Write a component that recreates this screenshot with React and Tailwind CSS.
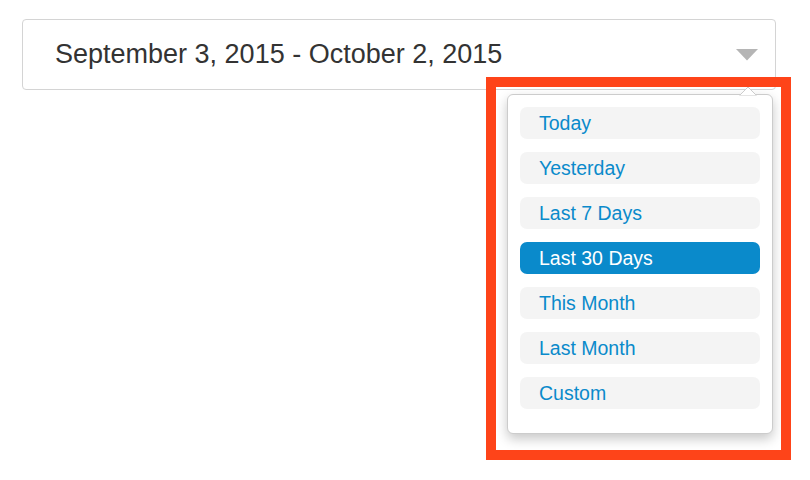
import React from "react";

const ranges = ["Today", "Yesterday", "Last 7 Days", "Last 30 Days", "This Month", "Last Month", "Custom"];

export default function App() {
  const active = "Last 30 Days";

  return (
    <div className="relative w-[810px] h-[480px] bg-white overflow-hidden font-['Liberation_Sans',Arial,sans-serif]">
      <div className="pt-[19px] pl-[22px]">
        <div className="w-[754px] h-[71px] border border-[#d4d4d4] rounded-[4px] flex items-center justify-between pl-[32px] pr-[17px]">
          <span className="text-[27px] leading-none text-[#333333]">September 3, 2015 - October 2, 2015</span>
          <svg width="22" height="12" viewBox="0 0 22 12">
            <polygon points="0,0 22,0 11,11.5" fill="#b5b5b5" />
          </svg>
        </div>
      </div>

      {/* dropdown */}
      <div className="absolute left-[507px] top-[94px] w-[266px] bg-white border border-[#cccccc] rounded-[6px] shadow-[0_5px_12px_rgba(0,0,0,0.22)] pt-[12px] pb-[24px] px-[12px]">
        <svg className="absolute left-[231px] top-[-9px]" width="18" height="10" viewBox="0 0 18 10">
          <polygon points="0.5,9.5 9,1 17.5,9.5" fill="#ffffff" stroke="#cccccc" strokeWidth="1" />
          <rect x="0" y="9.5" width="18" height="1" fill="#ffffff" />
        </svg>
        <ul className="flex flex-col gap-[13px]">
          {ranges.map((r) => (
            <li
              key={r}
              className={`h-[32px] flex items-center rounded-[7px] pl-[19px] pt-[2px] text-[19.5px] leading-none ${
                r === active ? "bg-[#0a8acb] text-white" : "bg-[#f4f4f4] text-[#0a8acb]"
              }`}
            >
              {r}
            </li>
          ))}
        </ul>
      </div>

      {/* annotation frame */}
      <div className="absolute left-[486px] top-[77px] w-[305px] h-[383px] border-[10px] border-[#fe4419]" />
    </div>
  );
}
